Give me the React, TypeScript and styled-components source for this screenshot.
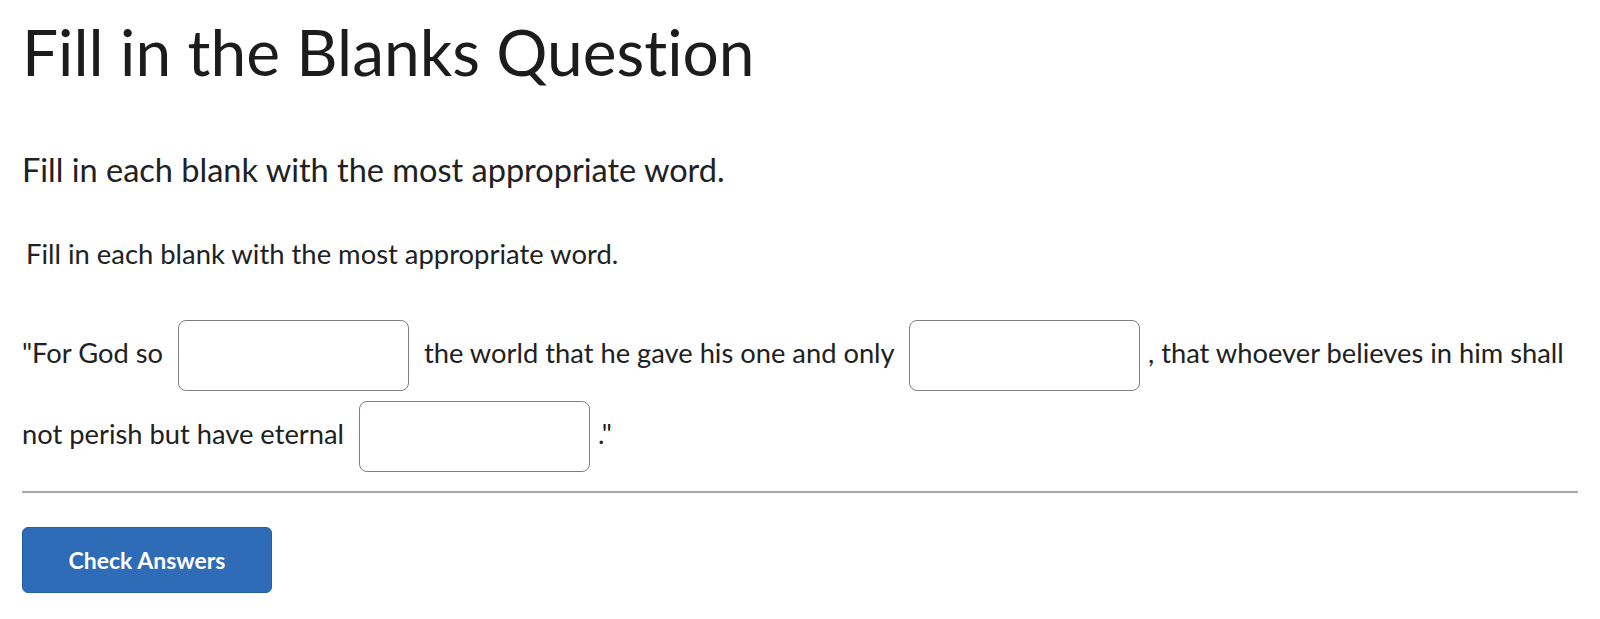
import React from "react";
import styled, { createGlobalStyle } from "styled-components";

const GlobalStyle = createGlobalStyle`
  html, body {
    margin: 0;
    padding: 0;
    background: #ffffff;
  }
  body {
    font-family: Lato, "Noto Sans", "Liberation Sans", sans-serif;
    color: #202122;
    font-variant-ligatures: no-common-ligatures;
  }
`;

const Page = styled.main`
  padding: 14px 22px 30px 22px;
`;

const Title = styled.h1`
  margin: 0;
  font-size: 64px;
  font-weight: 400;
  line-height: 1.2;
  color: #1c1c1c;
`;

const Subheading = styled.h2`
  margin: 59px 0 0 0;
  font-size: 32.5px;
  font-weight: 400;
  line-height: 1.2;
`;

const Instruction = styled.p`
  margin: 49px 0 0 4px;
  font-size: 27.4px;
  line-height: 1.2;
`;

const Sentence = styled.div`
  margin-top: 41px;
  font-size: 27.3px;
  line-height: 81px;
`;

const Blank = styled.input`
  box-sizing: border-box;
  display: inline-block;
  width: 231px;
  height: 71px;
  margin: 0 8px;
  vertical-align: middle;
  border: 1px solid #7d7d7d;
  border-radius: 8px;
  background: #fff;
  font: inherit;
  padding: 0 10px;
  outline: none;
`;

const Divider = styled.hr`
  margin: 17px 0 0 0;
  border: none;
  border-top: 2px solid #a8a8a8;
`;

const CheckButton = styled.button`
  display: block;
  margin-top: 34px;
  width: 250px;
  height: 66px;
  border-radius: 6px;
  border: 1px solid #1f5ea8;
  background: #2e6cb7;
  color: #ffffff;
  font-family: Lato, "Noto Sans", "Liberation Sans", sans-serif;
  font-weight: 700;
  font-size: 23px;
  cursor: pointer;
`;

export default function App() {
  return (
    <>
      <GlobalStyle />
      <Page>
        <Title>Fill in the Blanks Question</Title>
        <Subheading>Fill in each blank with the most appropriate word.</Subheading>
        <Instruction>Fill in each blank with the most appropriate word.</Instruction>
        <Sentence>
          "For God so <Blank aria-label="Blank 1" /> the world that he gave his one and only{" "}
          <Blank aria-label="Blank 2" />, that whoever believes in him shall not perish but have eternal{" "}
          <Blank aria-label="Blank 3" />."
        </Sentence>
        <Divider />
        <CheckButton>Check Answers</CheckButton>
      </Page>
    </>
  );
}
